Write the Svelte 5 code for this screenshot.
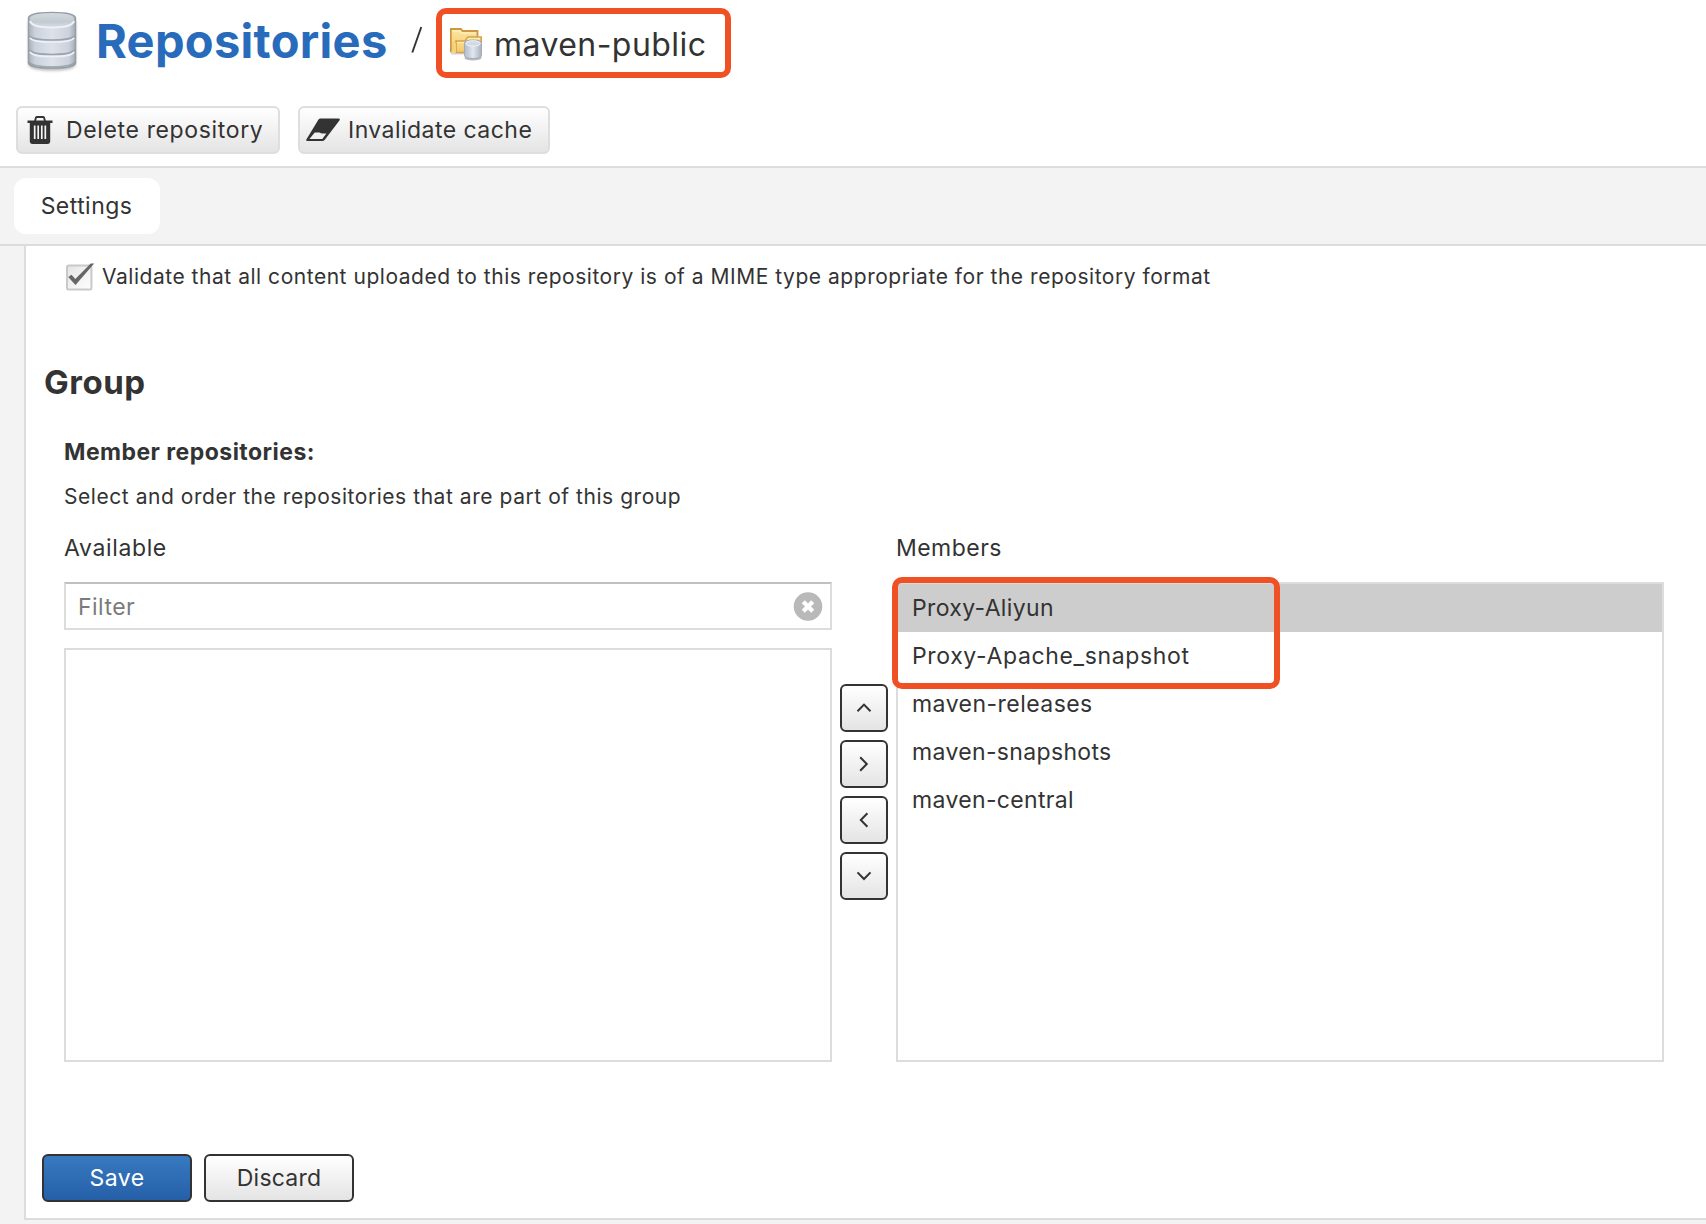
<script>
  let filter = $state('');
  let selected = $state(0);
  let validate = $state(true);

  const members = [
    { name: 'Proxy-Aliyun', tone: 'snug' },
    { name: 'Proxy-Apache_snapshot', tone: 'wide' },
    { name: 'maven-releases', tone: '' },
    { name: 'maven-snapshots', tone: 'snug' },
    { name: 'maven-central', tone: 'snug' }
  ];

  const moves = [
    { label: 'Move up', d: 'M6.5 16.2 L13 9.6 L19.5 16.2' },
    { label: 'Add to members', d: 'M9.2 6.2 L15.8 13 L9.2 19.8' },
    { label: 'Remove from members', d: 'M16.4 6.2 L9.8 13 L16.4 19.8' },
    { label: 'Move down', d: 'M6.5 9.4 L13 16 L19.5 9.4' }
  ];
</script>

<div class="page">
  <header class="crumbs">
    <svg class="db" viewBox="0 0 56 64" aria-hidden="true">
      <defs>
        <linearGradient id="side" x1="0" x2="1" y1="0" y2="0">
          <stop offset="0" stop-color="#a9b0ba" />
          <stop offset=".14" stop-color="#ccd2dc" />
          <stop offset=".5" stop-color="#dce1ea" />
          <stop offset=".86" stop-color="#ccd2dc" />
          <stop offset="1" stop-color="#a3abb4" />
        </linearGradient>
        <linearGradient id="lid" x1="0" x2="0" y1="0" y2="1">
          <stop offset="0" stop-color="#d3d9dd" />
          <stop offset=".6" stop-color="#c2cbd2" />
          <stop offset="1" stop-color="#d5dbe1" />
        </linearGradient>
        <filter id="soft" x="-20%" y="-20%" width="140%" height="140%">
          <feGaussianBlur stdDeviation="1.5" />
        </filter>
      </defs>
      <path d="M4.500 12 V54 Q4.500 60.500 28 60.500 T51.500 54 V12Z" fill="#777" opacity=".55" filter="url(#soft)" />
      <path d="M4.500 8 Q5 2.500 28 2.500 T51.500 8 V53 Q51.500 58 28 58 T4.500 53Z" fill="url(#side)" stroke="#969ea5" stroke-width="1.500" />
      <path d="M5 51 Q8 56 28 56 T51 51 V53 Q51 57.500 28 57.500 T5 53Z" fill="#8f989e" opacity=".7" />
      <path d="M6 9 Q6 17 28 17 T50 9 Q50 3.500 28 3.500 T6 9Z" fill="url(#lid)" />
      <path d="M6 11 Q8 17.500 28 17.500 T50 11" fill="none" stroke="#eef2f6" stroke-width="2" />
      <path d="M5 25.500 Q8 30 28 30 T51 25.500 M5 39.500 Q8 44.500 28 44.500 T51 39.500" fill="none" stroke="#9aa2ab" stroke-width="1.600" />
      <path d="M6 27.800 Q8 32 28 32 T50 27.800 M6 41.800 Q8 46.500 28 46.500 T50 41.800" fill="none" stroke="#eef1f6" stroke-width="1.700" />
    </svg>
    <h1>Repositories</h1>
    <svg class="slash" viewBox="0 0 12 28" aria-hidden="true">
      <path d="M1.300 26.500 L10.300 1" stroke="#333" stroke-width="1.900" fill="none" />
    </svg>
    <div class="current">
      <svg class="folder" viewBox="0 0 32 34" aria-hidden="true">
        <defs>
          <linearGradient id="gold" x1="0" x2="0" y1="0" y2="1">
            <stop offset="0" stop-color="#fbe6a2" />
            <stop offset="1" stop-color="#f3c867" />
          </linearGradient>
          <linearGradient id="can" x1="0" x2="1" y1="0" y2="0">
            <stop offset="0" stop-color="#b3bbc7" />
            <stop offset=".5" stop-color="#e1e6ef" />
            <stop offset="1" stop-color="#a9b2be" />
          </linearGradient>
        </defs>
        <path d="M1 25.500 H18" stroke="#aaa" stroke-width="2" opacity=".5" />
        <path d="M.8 1 H11 L12.500 3 H27.500 V21 L.8 23.500Z" fill="url(#gold)" stroke="#cf9740" stroke-width="1.800" />
        <path d="M2.500 2.800 H10 L11.500 5 H26" fill="none" stroke="#fff3c8" stroke-width="1.200" />
        <path d="M6 24.500 V13 H15 L18 9 H31.200 V24.500Z" fill="url(#gold)" stroke="#d7a24c" stroke-width="1.600" />
        <path d="M7.300 14.500 H16 L18.500 10.500 H30" fill="none" stroke="#fff0bd" stroke-width="1.200" />
        <path d="M.8 24.500 L6 14 V24.500Z" fill="#f6d27c" />
        <ellipse cx="23" cy="30" rx="8.500" ry="2.600" fill="#777" opacity=".5" />
        <path d="M14.500 15 Q14.500 12 23 12 T31.500 15 V27.500 Q31.500 30.500 23 30.500 T14.500 27.500Z" fill="url(#can)" stroke="#a3abb6" />
        <ellipse cx="23" cy="15.500" rx="7.300" ry="2.700" fill="#d3dae2" stroke="#f1f4f8" />
      </svg>
      <span>maven-public</span>
    </div>
  </header>

  <div class="actions">
    <button class="btn tool delete">
      <svg class="trash" viewBox="0 0 26 28" aria-hidden="true">
        <path d="M8 5 L9 1.500 Q9.200 1 10 1 H16 Q16.800 1 17 1.500 L18 5" fill="none" stroke="#333" stroke-width="1.900" />
        <path d="M.5 4.600 H25.500 V7 H23.200 V25 Q23.200 28 20.500 28 H5.500 Q2.800 28 2.800 25 V7 H.5Z" fill="#333" />
        <path d="M7.700 9.500 V23 M11.200 9.500 V23 M14.800 9.500 V23 M18.300 9.500 V23" stroke="#f5f5f5" stroke-width="1.700" />
      </svg>
      <span>Delete repository</span>
    </button>
    <button class="btn tool invalidate">
      <svg class="eraser" viewBox="0 0 34 24" aria-hidden="true">
        <path d="M14.500 .5 H32.500 Q34.400 .5 33.600 2.300 L18.800 21.800 Q17.800 23 16.300 23 H1.500 Q-.4 23 .5 21.200 L12.500 1.500 Q13.200 .5 14.500 .5Z" fill="#333" />
        <path d="M8.800 14.400 H13.500 Q15 15.400 16.500 15.400 H20.400 L16.300 21 H3.400Z" fill="#f0f0f0" />
      </svg>
      <span>Invalidate cache</span>
    </button>
  </div>

  <nav class="tabs"><button class="tab">Settings</button></nav>

  <main class="panel">
    <label class="check">
      <input type="checkbox" bind:checked={validate} />
      <svg class="box" viewBox="0 0 30 30" aria-hidden="true">
        <defs>
          <linearGradient id="boxFill" x1="0" x2="1" y1="0" y2="1">
            <stop offset="0" stop-color="#e4e4e4" />
            <stop offset="1" stop-color="#fff" />
          </linearGradient>
        </defs>
        <rect x="2" y="3.600" width="24.400" height="24" rx="1.500" fill="url(#boxFill)" stroke="#c9c9c9" stroke-width="2" />
        {#if validate}
          <path d="M3.200 15 L6.500 12.700 L10.300 17.100 L25.700 1.400 H29.200 L10.500 22.900Z" fill="#666" />
        {/if}
      </svg>
      <span>Validate that all content uploaded to this repository is of a MIME type appropriate for the repository format</span>
    </label>

    <h2>Group</h2>

    <section class="field">
      <h3>Member repositories:</h3>
      <p class="help">Select and order the repositories that are part of this group</p>

      <div class="picker">
        <div class="side">
          <div class="caption wide">Available</div>
          <div class="filter">
            <input type="text" placeholder="Filter" bind:value={filter} />
            <svg class="clear" viewBox="0 0 30 30" aria-hidden="true">
              <circle cx="15" cy="15.500" r="14.300" fill="#b9b9b9" />
              <path d="M10.300 10.800 L19.700 20.200 M19.700 10.800 L10.300 20.200" stroke="#fff" stroke-width="4.400" />
            </svg>
          </div>
          <div class="list available"></div>
        </div>

        <div class="moves">
          {#each moves as move}
            <button class="btn move" aria-label={move.label}>
              <svg viewBox="0 0 26 26" aria-hidden="true">
                <path d={move.d} fill="none" stroke="#333" stroke-width="2" />
              </svg>
            </button>
          {/each}
        </div>

        <div class="side">
          <div class="caption">Members</div>
          <div class="list members">
            {#each members as member, i}
              <button class="row {member.tone}" class:selected={selected === i} onclick={() => (selected = i)}>{member.name}</button>
            {/each}
            <div class="highlight"></div>
          </div>
        </div>
      </div>
    </section>

    <footer>
      <button class="btn save">Save</button>
      <button class="btn discard">Discard</button>
    </footer>
  </main>
</div>

<style>
  :global(body) {
    background: #f3f3f3;
    overflow: hidden;
  }
  .page,
  .page * {
    box-sizing: border-box;
  }
  .page {
    display: flex;
    flex-direction: column;
    height: 1224px;
    font: 400 23px/28px Inter, 'Liberation Sans', sans-serif;
    letter-spacing: 0.46px;
    color: #333;
    background: #f3f3f3;
    white-space: nowrap;
  }
  button,
  input {
    font: inherit;
    letter-spacing: inherit;
    color: inherit;
    margin: 0;
  }
  svg {
    display: block;
    flex: none;
  }
  h1,
  h2,
  h3,
  p {
    margin: 0;
  }

  .crumbs {
    display: flex;
    align-items: flex-start;
    height: 106px;
    padding: 8px 0 0 24px;
    background: #fff;
  }
  .db {
    width: 56px;
    height: 64px;
    margin-top: 2px;
  }
  h1 {
    width: 315px;
    padding-left: 16px;
    font-size: 47px;
    line-height: 66px;
    font-weight: 700;
    letter-spacing: 0.3px;
    color: #296bbb;
  }
  .slash {
    width: 12px;
    height: 28px;
    margin: 18px 0 0 16px;
  }
  .current {
    display: flex;
    align-items: center;
    width: 295px;
    height: 70px;
    margin-left: 13px;
    padding-left: 8px;
    border: 6px solid #ef5024;
    border-radius: 10px;
  }
  .folder {
    width: 32px;
    height: 34px;
    margin-top: 4px;
  }
  .current span {
    margin: 4px 0 0 12px;
    font-size: 32px;
    line-height: 40px;
    letter-spacing: 0.45px;
  }

  .btn {
    display: flex;
    align-items: center;
    justify-content: center;
    height: 48px;
    padding: 0;
    border: 2px solid #333;
    border-radius: 6px;
    background: linear-gradient(#fff, #e4e4e4);
  }
  .actions {
    display: flex;
    gap: 18px;
    height: 60px;
    padding-left: 16px;
    background: #fff;
  }
  .tool {
    justify-content: flex-start;
    border-color: #dedede;
  }
  .delete {
    width: 264px;
    padding-left: 9px;
    letter-spacing: 0.64px;
  }
  .trash {
    width: 26px;
    height: 28px;
    margin-right: 13px;
  }
  .invalidate {
    width: 252px;
    padding-left: 6px;
  }
  .eraser {
    width: 34px;
    height: 24px;
    margin-right: 8px;
  }

  .tabs {
    display: flex;
    align-items: center;
    height: 80px;
    padding-left: 14px;
    border-top: 2px solid #dcdcdc;
    border-bottom: 2px solid #dcdcdc;
    background: #f3f3f3;
  }
  .tab {
    width: 146px;
    height: 56px;
    padding: 0 1px 0 0;
    border: 0;
    border-radius: 12px;
    background: #fff;
  }

  .panel {
    height: 974px;
    margin-left: 24px;
    padding-left: 16px;
    border-left: 2px solid #dcdcdc;
    border-bottom: 2px solid #dcdcdc;
    background: #fff;
  }
  .check {
    display: flex;
    align-items: center;
    height: 61px;
    padding-left: 23px;
    font-size: 21px;
    letter-spacing: 0.53px;
  }
  .check input {
    position: absolute;
    opacity: 0;
    pointer-events: none;
  }
  .box {
    width: 30px;
    height: 30px;
    margin-right: 7px;
  }
  h2 {
    padding: 55px 0 0 2px;
    font-size: 33px;
    line-height: 40px;
    font-weight: 700;
    letter-spacing: 0.5px;
  }
  .field {
    padding: 36px 0 0 22px;
  }
  h3 {
    font-size: 23px;
    line-height: 28px;
    font-weight: 700;
    letter-spacing: 0.46px;
  }
  .help {
    padding-top: 16px;
    font-size: 21px;
    line-height: 30px;
    letter-spacing: 0.55px;
  }
  .picker {
    display: flex;
    padding-top: 21px;
  }
  .side {
    width: 768px;
  }
  .caption {
    height: 49px;
    line-height: 30px;
  }
  .filter {
    display: flex;
    align-items: center;
    height: 48px;
    margin-bottom: 18px;
    padding: 0 7px 0 12px;
    border: 2px solid #dcdcdc;
    border-top-color: #c0c0c0;
  }
  .filter input {
    flex: 1;
    height: 40px;
    padding: 2px 0 0;
    border: 0;
    outline: 0;
    background: none;
  }
  .filter input::placeholder {
    color: #7b7b7b;
    opacity: 1;
  }
  .clear {
    width: 30px;
    height: 30px;
  }
  .list {
    border: 2px solid #dcdcdc;
  }
  .available {
    height: 414px;
  }
  .members {
    position: relative;
    height: 480px;
  }
  .moves {
    display: flex;
    flex-direction: column;
    gap: 8px;
    width: 64px;
    padding: 151px 0 0 8px;
  }
  .move {
    width: 48px;
  }
  .move svg {
    width: 26px;
    height: 26px;
  }
  .row {
    display: block;
    width: 100%;
    height: 48px;
    padding: 0 0 0 14px;
    border: 0;
    background: none;
    text-align: left;
  }
  .snug {
    letter-spacing: 0.34px;
  }
  .wide {
    letter-spacing: 0.64px;
  }
  .selected {
    background: #cdcdcd;
  }
  .highlight {
    position: absolute;
    left: -6px;
    top: -7px;
    width: 388px;
    height: 112px;
    border: 6px solid #ef5024;
    border-radius: 10px;
    pointer-events: none;
  }

  footer {
    display: flex;
    gap: 12px;
    padding-top: 92px;
  }
  .save,
  .discard {
    width: 150px;
  }
  .save {
    color: #fff;
    background: linear-gradient(#3879c0, #2560a7);
  }
  .discard {
    letter-spacing: 0.2px;
  }
</style>
